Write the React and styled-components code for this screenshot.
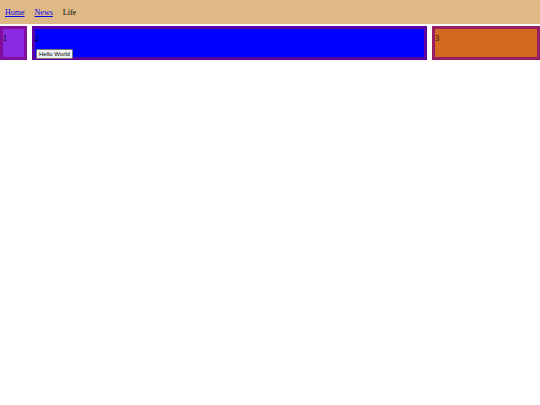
import React from "react";
import styled, { createGlobalStyle } from "styled-components";

const Global = createGlobalStyle`
  html, body { margin: 0; padding: 0; background: #ffffff; }
  body { font-family: "Liberation Serif", "Times New Roman", serif; font-size: 8px; }
`;

const Header = styled.nav`
  height: 24px;
  background: #deb887;
  display: flex;
  align-items: center;
  gap: 10px;
  padding: 0 5px;
  font-size: 8px;
  box-sizing: border-box;
`;

const NavLink = styled.a`
  color: #0000ee;
  text-decoration: underline;
`;

const NavText = styled.span`
  color: #000;
`;

const Row = styled.div`
  display: flex;
  gap: 5px;
  margin-top: 2px;
`;

const Box = styled.div`
  box-sizing: border-box;
  height: 34px;
  border: 3px solid rgba(128, 0, 128, 0.72);
  background: ${(p) => p.$bg};
  flex: ${(p) => p.$flex};
  display: flex;
  flex-direction: column;
  align-items: flex-start;
  padding-top: 5px;
  line-height: 9px;
  color: #000;
`;

const Button = styled.button`
  margin-top: 6px;
  margin-left: 1px;
  font-family: "Liberation Sans", Arial, sans-serif;
  font-size: 6px;
  line-height: 7px;
  padding: 0.5px 2px;
  background: #f0f0f0;
  border: 1px solid #767676;
  border-radius: 1.5px;
  color: #000;
`;

export default function App() {
  return (
    <>
      <Global />
      <Header>
        <NavLink href="#">Home</NavLink>
        <NavLink href="#">News</NavLink>
        <NavText>Life</NavText>
      </Header>
      <Row>
        <Box $bg="#8a2be2" $flex="0 0 27px">1</Box>
        <Box $bg="#0000ff" $flex="1 1 auto">
          2
          <Button>Hello World</Button>
        </Box>
        <Box $bg="#d2691e" $flex="0 0 108px">3</Box>
      </Row>
    </>
  );
}
